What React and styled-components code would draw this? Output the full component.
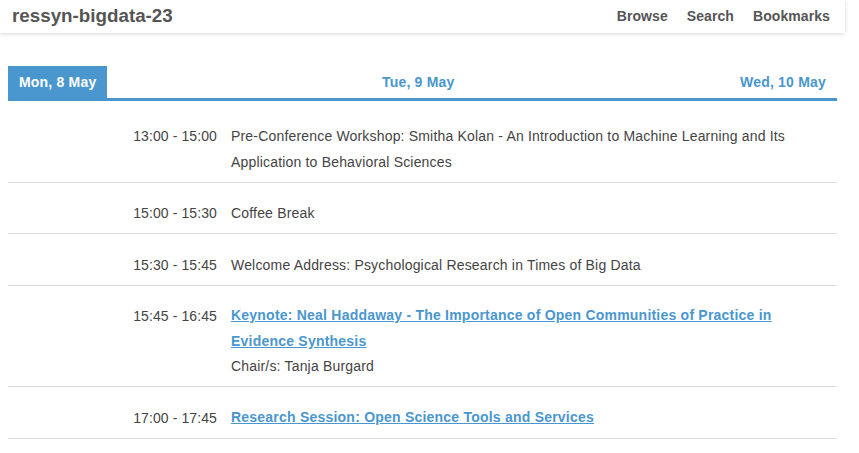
import React from "react";
import styled, { createGlobalStyle } from "styled-components";

const GlobalStyle = createGlobalStyle`
  html, body {
    margin: 0;
    padding: 0;
    background: #ffffff;
  }
  body {
    font-family: "Liberation Sans", Arial, Helvetica, sans-serif;
    color: #444444;
  }
`;

const BLUE = "#4a96cf";

const Page = styled.div`
  width: 845px;
`;

const Header = styled.header`
  height: 33px;
  display: flex;
  align-items: center;
  justify-content: space-between;
  padding: 0 15px 0 12px;
  box-shadow: 0 1px 4px rgba(0, 0, 0, 0.16);
  box-sizing: border-box;
`;

const Brand = styled.div`
  font-size: 18.8px;
  font-weight: bold;
  color: #555555;
  padding-bottom: 1px;
`;

const Nav = styled.nav`
  display: flex;
  gap: 19px;
`;

const NavLink = styled.a`
  font-size: 14px;
  font-weight: bold;
  letter-spacing: 0.08px;
  color: #555555;
  text-decoration: none;
  padding-bottom: 1px;
`;

const Main = styled.main`
  padding: 33px 8px 0;
`;

const TabBar = styled.div`
  display: flex;
  justify-content: space-between;
  border-bottom: 3px solid ${BLUE};
`;

const Tab = styled.a`
  padding: 0 11px;
  line-height: 32px;
  font-size: 14px;
  font-weight: bold;
  letter-spacing: 0.2px;
  text-decoration: none;
  color: ${(p) => (p.$active ? "#ffffff" : BLUE)};
  background: ${(p) => (p.$active ? BLUE : "transparent")};
`;

const List = styled.div`
  margin-top: 4px;
`;

const Row = styled.div`
  display: grid;
  grid-template-columns: 209px 1fr;
  column-gap: 14px;
  padding: 17.75px 15px 6.75px 0;
  border-bottom: 1px solid #dddddd;
  font-size: 14px;
  line-height: 26px;
  letter-spacing: 0.18px;
`;

const Time = styled.div`
  text-align: right;
  color: #444444;
  letter-spacing: 0.1px;
`;

const Body = styled.div`
  color: #444444;
`;

const TitleLink = styled.a`
  display: block;
  line-height: 25.5px;
  color: ${BLUE};
  font-weight: bold;
  letter-spacing: 0.22px;
  text-decoration: underline;
`;

const Chair = styled.div`
  line-height: 25px;
  color: #444444;
`;

const sessions = [
  {
    time: "13:00 - 15:00",
    title:
      "Pre-Conference Workshop: Smitha Kolan - An Introduction to Machine Learning and Its Application to Behavioral Sciences",
  },
  { time: "15:00 - 15:30", title: "Coffee Break" },
  {
    time: "15:30 - 15:45",
    title: "Welcome Address: Psychological Research in Times of Big Data",
  },
  {
    time: "15:45 - 16:45",
    title:
      "Keynote: Neal Haddaway - The Importance of Open Communities of Practice in Evidence Synthesis",
    link: true,
    chair: "Tanja Burgard",
  },
  {
    time: "17:00 - 17:45",
    title: "Research Session: Open Science Tools and Services",
    link: true,
  },
];

export default function App() {
  return (
    <Page>
      <GlobalStyle />
      <Header>
        <Brand>ressyn-bigdata-23</Brand>
        <Nav>
          <NavLink href="#">Browse</NavLink>
          <NavLink href="#">Search</NavLink>
          <NavLink href="#">Bookmarks</NavLink>
        </Nav>
      </Header>
      <Main>
        <TabBar>
          <Tab href="#" $active>
            Mon, 8 May
          </Tab>
          <Tab href="#">Tue, 9 May</Tab>
          <Tab href="#">Wed, 10 May</Tab>
        </TabBar>
        <List>
          {sessions.map((s) => (
            <Row key={s.time}>
              <Time>{s.time}</Time>
              <Body>
                {s.link ? <TitleLink href="#">{s.title}</TitleLink> : s.title}
                {s.chair && <Chair>Chair/s: {s.chair}</Chair>}
              </Body>
            </Row>
          ))}
        </List>
      </Main>
    </Page>
  );
}
